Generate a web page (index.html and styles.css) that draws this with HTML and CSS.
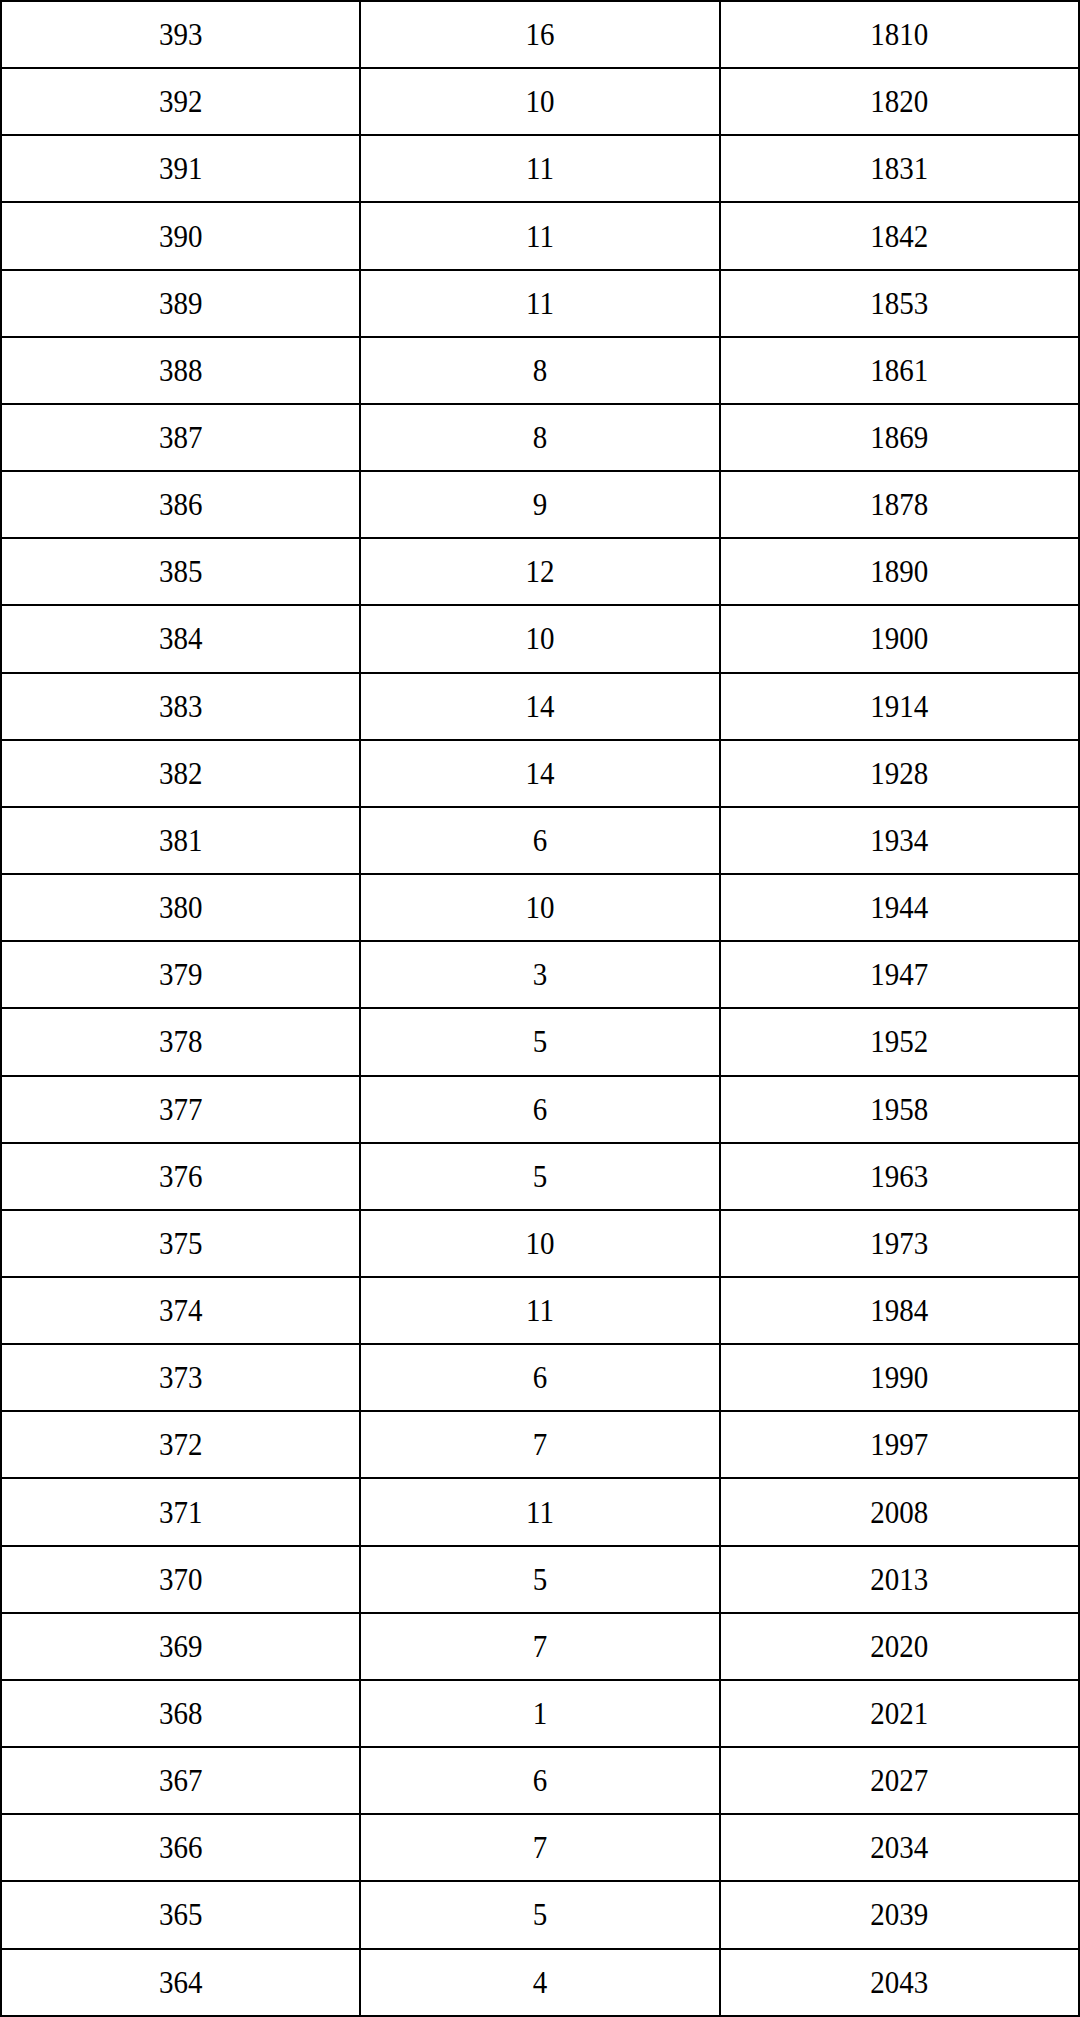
FILE: index.html
```html
<!DOCTYPE html>
<html>
<head>
<meta charset="utf-8">
<link rel="stylesheet" href="styles.css">
</head>
<body>
<table class="grid">
<tbody>
<tr><td><span>393</span></td><td><span>16</span></td><td><span>1810</span></td></tr>
<tr><td><span>392</span></td><td><span>10</span></td><td><span>1820</span></td></tr>
<tr><td><span>391</span></td><td><span>11</span></td><td><span>1831</span></td></tr>
<tr><td><span>390</span></td><td><span>11</span></td><td><span>1842</span></td></tr>
<tr><td><span>389</span></td><td><span>11</span></td><td><span>1853</span></td></tr>
<tr><td><span>388</span></td><td><span>8</span></td><td><span>1861</span></td></tr>
<tr><td><span>387</span></td><td><span>8</span></td><td><span>1869</span></td></tr>
<tr><td><span>386</span></td><td><span>9</span></td><td><span>1878</span></td></tr>
<tr><td><span>385</span></td><td><span>12</span></td><td><span>1890</span></td></tr>
<tr><td><span>384</span></td><td><span>10</span></td><td><span>1900</span></td></tr>
<tr><td><span>383</span></td><td><span>14</span></td><td><span>1914</span></td></tr>
<tr><td><span>382</span></td><td><span>14</span></td><td><span>1928</span></td></tr>
<tr><td><span>381</span></td><td><span>6</span></td><td><span>1934</span></td></tr>
<tr><td><span>380</span></td><td><span>10</span></td><td><span>1944</span></td></tr>
<tr><td><span>379</span></td><td><span>3</span></td><td><span>1947</span></td></tr>
<tr><td><span>378</span></td><td><span>5</span></td><td><span>1952</span></td></tr>
<tr><td><span>377</span></td><td><span>6</span></td><td><span>1958</span></td></tr>
<tr><td><span>376</span></td><td><span>5</span></td><td><span>1963</span></td></tr>
<tr><td><span>375</span></td><td><span>10</span></td><td><span>1973</span></td></tr>
<tr><td><span>374</span></td><td><span>11</span></td><td><span>1984</span></td></tr>
<tr><td><span>373</span></td><td><span>6</span></td><td><span>1990</span></td></tr>
<tr><td><span>372</span></td><td><span>7</span></td><td><span>1997</span></td></tr>
<tr><td><span>371</span></td><td><span>11</span></td><td><span>2008</span></td></tr>
<tr><td><span>370</span></td><td><span>5</span></td><td><span>2013</span></td></tr>
<tr><td><span>369</span></td><td><span>7</span></td><td><span>2020</span></td></tr>
<tr><td><span>368</span></td><td><span>1</span></td><td><span>2021</span></td></tr>
<tr><td><span>367</span></td><td><span>6</span></td><td><span>2027</span></td></tr>
<tr><td><span>366</span></td><td><span>7</span></td><td><span>2034</span></td></tr>
<tr><td><span>365</span></td><td><span>5</span></td><td><span>2039</span></td></tr>
<tr><td><span>364</span></td><td><span>4</span></td><td><span>2043</span></td></tr>
</tbody>
</table>
</body>
</html>
```
FILE: styles.css
```css
html, body {
  margin: 0;
  padding: 0;
  background: #fff;
}
.grid {
  width: 1080px;
  height: 2017px;
  border-collapse: collapse;
  table-layout: fixed;
  font-family: "Liberation Serif", "Times New Roman", serif;
  font-size: 29px;
  color: #000;
}
.grid td {
  border: 2px solid #000;
  text-align: center;
  vertical-align: middle;
  padding: 0;
  width: 33.333%;
}
.grid td span {
  display: inline-block;
  transform: scaleY(1.12);
}
```
